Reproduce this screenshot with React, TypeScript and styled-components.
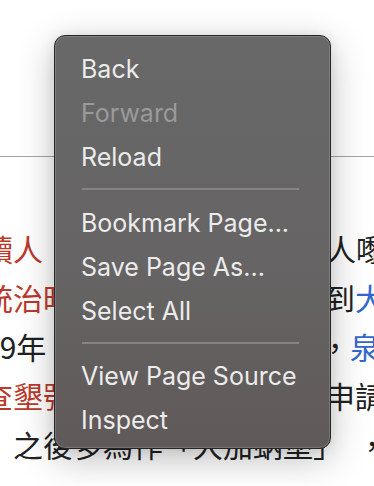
import React from "react";
import styled, { createGlobalStyle } from "styled-components";

const GlobalStyle = createGlobalStyle`
  html, body { margin: 0; padding: 0; background: #ffffff; }
  body { overflow: hidden; }
  * { box-sizing: border-box; }
`;

const Page = styled.div`
  position: relative;
  width: 374px;
  height: 486px;
  overflow: hidden;
  background: #ffffff;
`;

const Rule = styled.div`
  margin-top: 156px;
  height: 1px;
  background: #a4a4a4;
`;

const Body = styled.div`
  margin-top: 67px;
  font-family: "Noto Sans CJK TC", "Noto Sans CJK SC", sans-serif;
  font-size: 30px;
  color: #202122;
`;

const Line = styled.div`
  display: flex;
  height: 49px;
  line-height: 49px;
  white-space: nowrap;
`;

const Lead = styled.span<{ $offset: number }>`
  flex-shrink: 0;
  margin-left: ${(p) => p.$offset}px;
`;

const Tail = styled.span<{ $over: number }>`
  flex-shrink: 0;
  margin-left: auto;
  margin-right: ${(p) => -p.$over}px;
`;

const Red = styled.span`
  color: #ba3a2c;
`;

const Blue = styled.span`
  color: #3366cc;
`;

const Gap = styled.span<{ $w: number }>`
  display: inline-block;
  width: ${(p) => p.$w}px;
`;

const Menu = styled.div`
  position: absolute;
  left: 54px;
  top: 35px;
  width: 277px;
  padding: 11px 0 6px;
  border: 1px solid #262626;
  border-radius: 11px;
  background: linear-gradient(180deg, #686868 0%, #666464 55%, #605959 100%);
  box-shadow: inset 0 0 0 1px rgba(255, 255, 255, 0.16),
    0 10px 36px rgba(0, 0, 0, 0.26), 0 0 12px rgba(0, 0, 0, 0.08);
  display: flex;
  flex-direction: column;
`;

const Item = styled.div<{ $disabled?: boolean }>`
  height: 44px;
  line-height: 44px;
  padding-left: 26px;
  font-family: Inter, "Noto Sans", sans-serif;
  font-size: 25px;
  font-weight: 400;
  color: ${(p) => (p.$disabled ? "#9a9a9a" : "#ececec")};
  white-space: nowrap;
`;

const Separator = styled.div`
  height: 2px;
  margin: 9px 31px 10.5px 27px;
  background: #848484;
`;

export default function App() {
  return (
    <>
      <GlobalStyle />
      <Page>
        <Rule />
        <Body>
          <Line>
            <Lead $offset={-17}>
              <Red>讀人</Red>
            </Lead>
            <Tail $over={12}>人嚟</Tail>
          </Line>
          <Line>
            <Lead $offset={-17}>
              <Red>統治時</Red>
            </Lead>
            <Tail $over={11}>
              到<Blue>大</Blue>
            </Tail>
          </Line>
          <Line>
            <Lead $offset={-17}>19年</Lead>
            <Tail $over={6}>
              ，<Blue>泉</Blue>
            </Tail>
          </Line>
          <Line>
            <Lead $offset={-17}>
              <Red>查墾號</Red>
            </Lead>
            <Tail $over={11}>申請</Tail>
          </Line>
          <Line>
            <Lead $offset={13}>
              之後多為作「大加蚋堡」<Gap $w={14} />，
            </Lead>
          </Line>
        </Body>
        <Menu>
          <Item>Back</Item>
          <Item $disabled>Forward</Item>
          <Item>Reload</Item>
          <Separator />
          <Item>Bookmark Page...</Item>
          <Item>Save Page As...</Item>
          <Item>Select All</Item>
          <Separator />
          <Item>View Page Source</Item>
          <Item>Inspect</Item>
        </Menu>
      </Page>
    </>
  );
}
